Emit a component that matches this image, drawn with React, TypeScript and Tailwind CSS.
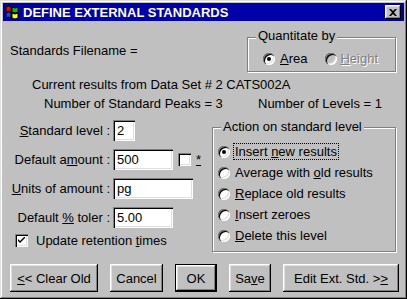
import React from 'react';

const sunken =
  'shadow-[inset_1px_1px_0_#808080,inset_2px_2px_0_#000,inset_-1px_-1px_0_#fff,inset_-2px_-2px_0_#dfdfdf]';
const raised =
  'shadow-[inset_-1px_-1px_0_#000,inset_1px_1px_0_#fff,inset_-2px_-2px_0_#808080,inset_2px_2px_0_#dfdfdf]';
const etched = 'border border-[#808080] shadow-[inset_1px_1px_0_#fff,1px_1px_0_#fff]';

function Radio({ checked, disabled }: { checked?: boolean; disabled?: boolean }) {
  return (
    <span
      className={`flex w-[12px] h-[12px] shrink-0 items-center justify-center rounded-full ${sunken} ${
        disabled ? 'bg-[#c0c0c0]' : 'bg-white'
      }`}
    >
      {checked && <span className="w-[4px] h-[4px] rounded-full bg-black" />}
    </span>
  );
}

function Check({ checked }: { checked?: boolean }) {
  return (
    <span className={`flex w-[13px] h-[13px] shrink-0 items-center justify-center bg-white ${sunken}`}>
      {checked && (
        <svg width="7" height="7" viewBox="0 0 7 7">
          <path d="M0 2 L0 4 L2 6 L7 1 L7 -1 L2 4 Z" fill="#000" />
        </svg>
      )}
    </span>
  );
}

function Field({
  label,
  value,
  width,
  children,
}: {
  label: React.ReactNode;
  value: string;
  width: string;
  children?: React.ReactNode;
}) {
  return (
    <div className="flex items-center h-[21px]">
      <span className="w-[107px] text-right whitespace-nowrap">{label}</span>
      <input
        readOnly
        value={value}
        className={`ml-[3px] h-[21px] ${width} bg-white px-[4px] outline-none ${sunken}`}
      />
      {children}
    </div>
  );
}

function ActionRow({ children, checked }: { children: React.ReactNode; checked?: boolean }) {
  return (
    <div className="flex items-center h-[21px] pl-[5px]">
      <Radio checked={checked} />
      <span
        className={`ml-[3px] px-[1px] border border-dotted ${
          checked ? 'border-black' : 'border-transparent'
        }`}
      >
        {children}
      </span>
    </div>
  );
}

function Btn({ children, width, isDefault }: { children: React.ReactNode; width: string; isDefault?: boolean }) {
  return (
    <button
      className={`${width} h-[28px] flex items-center justify-center bg-[#c0c0c0] ${
        isDefault ? 'border border-black' : ''
      }`}
    >
      <span className={`w-full h-full flex items-center justify-center ${raised}`}>{children}</span>
    </button>
  );
}

export default function App() {
  return (
    <div className="w-[407px] h-[299px] bg-[#c0c0c0] p-[3px] text-black text-[13px] leading-[15px] font-['Liberation_Sans',Arial,sans-serif] shadow-[inset_-1px_-1px_0_#000,inset_1px_1px_0_#dfdfdf,inset_-2px_-2px_0_#808080,inset_2px_2px_0_#fff]">
      {/* title bar */}
      <div className="flex items-center h-[18px] bg-[#0000a8] pl-[1px]">
        <svg width="16" height="16" viewBox="0 0 16 16">
          <path d="M2 3 Q4 1 7 3 L7 8 Q4 6 2 8 Z" fill="#ff0000" stroke="#000" strokeWidth="1" />
          <path d="M8 3 Q11 5 14 3 L14 8 Q11 10 8 8 Z" fill="#00c000" stroke="#000" strokeWidth="1" />
          <path d="M2 9 Q4 7 7 9 L7 14 Q4 12 2 14 Z" fill="#2040ff" stroke="#000" strokeWidth="1" />
          <path d="M8 9 Q11 11 14 9 L14 14 Q11 16 8 14 Z" fill="#ffff00" stroke="#000" strokeWidth="1" />
        </svg>
        <span className="ml-[3px] text-white font-bold">DEFINE EXTERNAL STANDARDS</span>
        <span className={`ml-auto mr-[3px] w-[16px] h-[14px] flex items-center justify-center bg-[#c0c0c0] ${raised}`}>
          <svg width="8" height="7" viewBox="0 0 8 7">
            <path d="M0 0 L2 0 L4 2 L6 0 L8 0 L5 3.5 L8 7 L6 7 L4 5 L2 7 L0 7 L3 3.5 Z" fill="#000" />
          </svg>
        </span>
      </div>

      {/* filename + quantitate */}
      <div className="flex items-start">
        <span className="ml-[7px] mt-[22px]">Standards Filename =</span>
        <div className={`ml-auto mr-[8px] mt-[16px] w-[149px] h-[35px] ${etched}`}>
          <div className="-mt-[10px] ml-[8px] w-fit px-[2px] bg-[#c0c0c0]">Quantitate by</div>
          <div className="flex items-center mt-[8px] pl-[15px]">
            <Radio checked />
            <span className="ml-[5px]">
              <u>A</u>rea
            </span>
            <span className="ml-[18px]">
              <Radio disabled />
            </span>
            <span className="ml-[3px] text-[#808080] [text-shadow:1px_1px_0_#fff]">
              <u>H</u>eight
            </span>
          </div>
        </div>
      </div>

      <div className="mt-[5px] ml-[29px]">Current results from Data Set # 2 CATS002A</div>
      <div className="mt-[4px] ml-[41px] flex">
        <span className="w-[214px]">Number of Standard Peaks = 3</span>
        <span>Number of Levels = 1</span>
      </div>

      {/* fields + action */}
      <div className="flex items-start">
        <div className="w-[209px] flex flex-col gap-[8px] pt-[9px]">
          <Field
            label={
              <>
                <u>S</u>tandard level :
              </>
            }
            value="2"
            width="w-[22px]"
          />
          <Field
            label={
              <>
                Default a<u>m</u>ount :
              </>
            }
            value="500"
            width="w-[60px]"
          >
            <span className="ml-[5px]">
              <Check />
            </span>
            <span className="ml-[5px]">
              <u>*</u>
            </span>
          </Field>
          <Field
            label={
              <>
                <u>U</u>nits of amount :
              </>
            }
            value="pg"
            width="w-[80px]"
          />
          <Field
            label={
              <>
                Default <u>%</u> toler :
              </>
            }
            value="5.00"
            width="w-[60px]"
          />
          <div className="flex items-center -mt-[3px] pl-[12px] h-[15px]">
            <Check checked />
            <span className="ml-[8px]">
              Update retention <u>t</u>imes
            </span>
          </div>
        </div>
        <div className={`ml-auto mr-[8px] mt-[16px] w-[184px] h-[125px] ${etched}`}>
          <div className="-mt-[9px] ml-[8px] w-fit px-[2px] bg-[#c0c0c0]">Action on standard level</div>
          <div className="mt-[7px] flex flex-col">
            <ActionRow checked>
              Insert <u>n</u>ew results
            </ActionRow>
            <ActionRow>
              Average with <u>o</u>ld results
            </ActionRow>
            <ActionRow>
              <u>R</u>eplace old results
            </ActionRow>
            <ActionRow>
              <u>I</u>nsert zeroes
            </ActionRow>
            <ActionRow>
              <u>D</u>elete this level
            </ActionRow>
          </div>
        </div>
      </div>

      {/* buttons */}
      <div className="flex gap-[12px] ml-[7px] mt-[12px]">
        <Btn width="w-[88px]">
          <u>&lt;</u>&lt; Clear Old
        </Btn>
        <Btn width="w-[53px]">Cancel</Btn>
        <Btn width="w-[42px]" isDefault>
          OK
        </Btn>
        <Btn width="w-[42px]">
          Sa<u>v</u>e
        </Btn>
        <Btn width="w-[116px]">
          Edit Ext. Std. &gt;<u>&gt;</u>
        </Btn>
      </div>
    </div>
  );
}
